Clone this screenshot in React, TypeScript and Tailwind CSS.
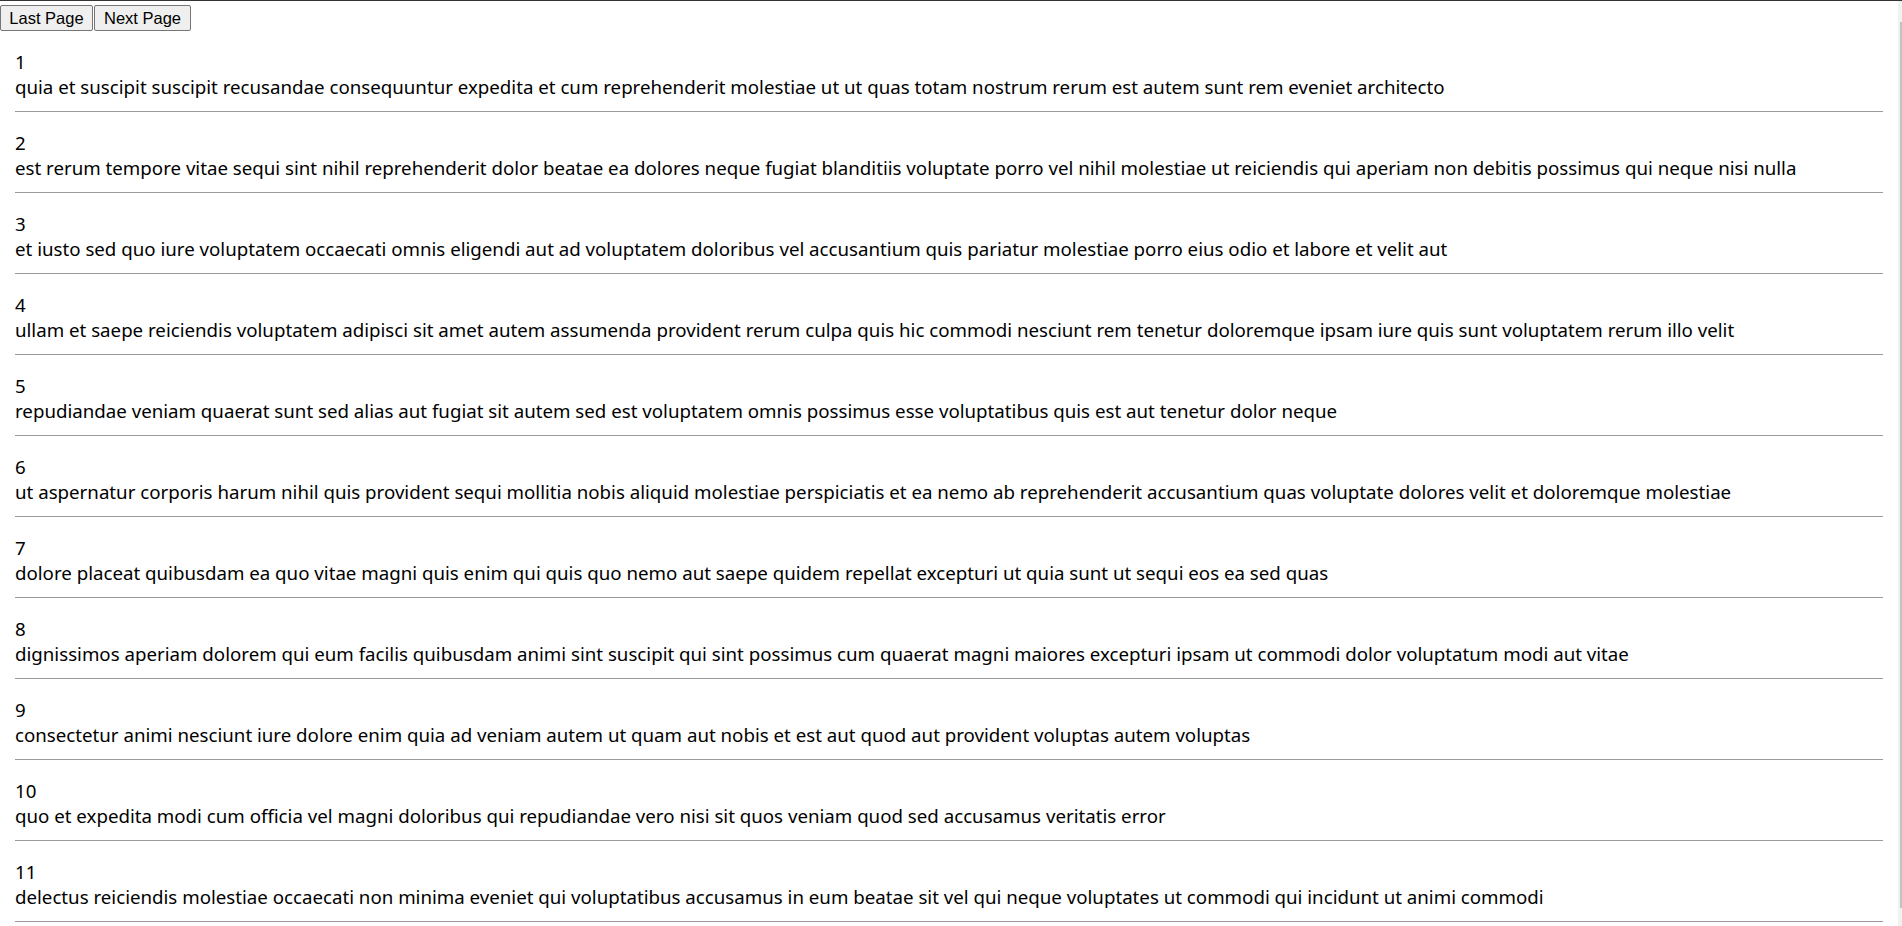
const posts = [
  "quia et suscipit suscipit recusandae consequuntur expedita et cum reprehenderit molestiae ut ut quas totam nostrum rerum est autem sunt rem eveniet architecto",
  "est rerum tempore vitae sequi sint nihil reprehenderit dolor beatae ea dolores neque fugiat blanditiis voluptate porro vel nihil molestiae ut reiciendis qui aperiam non debitis possimus qui neque nisi nulla",
  "et iusto sed quo iure voluptatem occaecati omnis eligendi aut ad voluptatem doloribus vel accusantium quis pariatur molestiae porro eius odio et labore et velit aut",
  "ullam et saepe reiciendis voluptatem adipisci sit amet autem assumenda provident rerum culpa quis hic commodi nesciunt rem tenetur doloremque ipsam iure quis sunt voluptatem rerum illo velit",
  "repudiandae veniam quaerat sunt sed alias aut fugiat sit autem sed est voluptatem omnis possimus esse voluptatibus quis est aut tenetur dolor neque",
  "ut aspernatur corporis harum nihil quis provident sequi mollitia nobis aliquid molestiae perspiciatis et ea nemo ab reprehenderit accusantium quas voluptate dolores velit et doloremque molestiae",
  "dolore placeat quibusdam ea quo vitae magni quis enim qui quis quo nemo aut saepe quidem repellat excepturi ut quia sunt ut sequi eos ea sed quas",
  "dignissimos aperiam dolorem qui eum facilis quibusdam animi sint suscipit qui sint possimus cum quaerat magni maiores excepturi ipsam ut commodi dolor voluptatum modi aut vitae",
  "consectetur animi nesciunt iure dolore enim quia ad veniam autem ut quam aut nobis et est aut quod aut provident voluptas autem voluptas",
  "quo et expedita modi cum officia vel magni doloribus qui repudiandae vero nisi sit quos veniam quod sed accusamus veritatis error",
  "delectus reiciendis molestiae occaecati non minima eveniet qui voluptatibus accusamus in eum beatae sit vel qui neque voluptates ut commodi qui incidunt ut animi commodi",
];

const App = () => {
  return (
    <div className="h-screen overflow-hidden flex flex-col bg-white border-t border-[#333333]">
      <div className="flex flex-1 min-h-0">
        <div className="flex-1 min-w-0">
          {/* pager */}
          <div className="flex mt-[4px] font-['Liberation_Sans',Arial,sans-serif] text-[16.5px] text-black">
            <button className="h-[26px] w-[93px] bg-[#efefef] border border-[#767676] rounded-[2px] leading-none">
              Last Page
            </button>
            <button className="h-[26px] w-[97px] ml-[1px] bg-[#efefef] border border-[#767676] rounded-[2px] leading-none">
              Next Page
            </button>
          </div>

          <div className="font-['Noto_Sans',sans-serif] text-[18.7px] leading-[25px] text-black">
            {posts.map((body, i) => (
              <div key={i} className="mx-[15px] pt-[18px]">
                <div>{i + 1}</div>
                <div className="whitespace-nowrap overflow-hidden">{body}</div>
                <div className="mt-[12px] border-t border-[#9a9a9a]" />
              </div>
            ))}
          </div>
        </div>

        {/* thin scrollbar */}
        <div className="w-[4px] bg-[#f1f1f1] flex justify-end">
          <div className="w-[2px] mt-[21px] h-[886px] bg-[#c1c1c1]" />
        </div>
      </div>
    </div>
  );
};

export default App;
